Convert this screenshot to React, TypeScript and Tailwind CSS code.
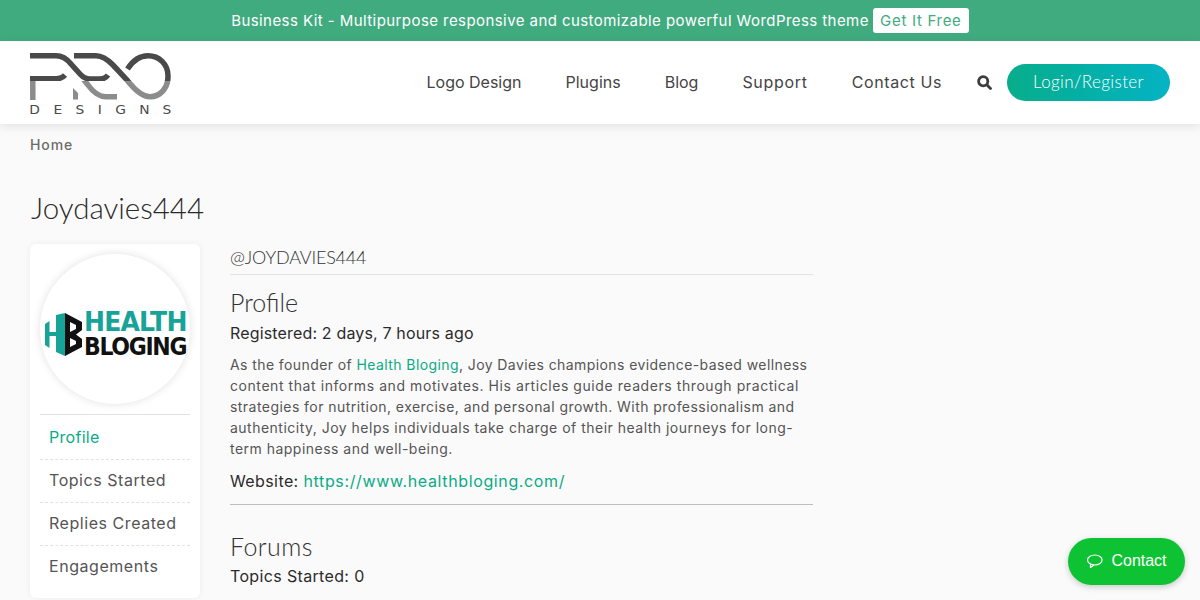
import React from "react";

const poppins = { fontFamily: "Inter, 'Noto Sans', sans-serif" };
const lato = { fontFamily: "Lato, sans-serif" };

function Logo() {
  return (
    <div className="relative w-[141px] h-[61px]">
      <svg width="141" height="47" viewBox="0 0 141 47" fill="none" className="block">
        <defs>
          <clipPath id="top"><rect x="0" y="0" width="141" height="28" /></clipPath>
          <clipPath id="bot"><rect x="0" y="28" width="141" height="20" /></clipPath>
        </defs>
        <g strokeWidth="5.500" fill="none">
          <g clipPath="url(#bot)" stroke="#8c8c8c">
            <path d="M2.800 26V47" />
            <path d="M46 17L58 32C63 39 68 43.700 76 43.700H87" />
            <path d="M83 12L97 27C104 36 112 43.700 120 43.700C131 43.700 138 34 138 24" />
          </g>
          <path d="M43 35L48 40V46.500H43Z" fill="#8c8c8c" stroke="none" />
          <g clipPath="url(#top)" stroke="#4a4a4a">
            <path d="M0 2.800H26C33 2.800 37 6 41 11L50 21C53 24.500 56 26 60 26H70C74 26 76 25 78 22" />
            <path d="M44 2.800H66C73 2.800 78 7 83 12L97 27C104 36 112 43.700 120 43.700C131 43.700 138 34 138 23C138 11 129 2.800 118 2.800C109 2.800 102 9 97.500 16" />
            <path d="M0 25.800H26C30 25.800 33 24.500 35 22" />
          </g>
        </g>
      </svg>
      <div className="absolute left-0 top-[50px] w-[141px] flex justify-between text-[#4a4a4a] text-[12px] leading-[14px] font-normal" style={{ fontFamily: "'DejaVu Sans', sans-serif" }}>
        {"DESIGNS".split("").map((c, i) => (
          <span key={i} className="scale-x-[1.15]">{c}</span>
        ))}
      </div>
    </div>
  );
}

function Avatar() {
  return (
    <div className="w-[150px] h-[150px] rounded-full bg-white shadow-[0_0_8px_rgba(0,0,0,0.12)] flex items-center gap-[1px] pl-[3px] pt-[10px] overflow-hidden">
      <svg width="40" height="47" viewBox="0 0 40 47" fill="none" className="shrink-0">
        <path d="M2 13L6.500 10V37L2 34Z" fill="#17a398" />
        <path d="M4 21H14V25H4Z" fill="#17a398" />
        <path d="M13 4L22 2V45L13 41Z" fill="#17a398" />
        <path d="M22 2L39 11V19L33 23.500L39 28V36L22 45Z" fill="#111" />
        <path d="M27 11L33 14V18L27 21ZM27 27L33 30V33L27 36Z" fill="#fff" />
      </svg>
      <div className="flex flex-col font-bold" style={{ fontFamily: "'DejaVu Sans', sans-serif" }}>
        <span className="text-[#17a398] tracking-[-0.9px] text-[27px] leading-[26px] scale-x-[0.93] origin-left">HEALTH</span>
        <span className="text-[#111] tracking-[-1.500px] text-[25px] leading-[24px] scale-x-[0.88] origin-left">BLOGING</span>
      </div>
    </div>
  );
}

export default function App() {
  return (
    <div className="relative h-[600px] overflow-hidden bg-[#fafafa] text-[#333]" style={poppins}>
      <div className="h-[41px] bg-[#41ab80] flex items-center justify-center text-white text-[15px] gap-1">
        <span className="tracking-[0.43px] pt-[1px]">Business Kit - Multipurpose responsive and customizable powerful WordPress theme</span>
        <span className="bg-white text-[#41ab80] rounded-[3px] h-[25px] w-[96px] flex items-center justify-center tracking-[0.7px] pt-[1px]">Get It Free</span>
      </div>

      <header className="relative h-[83px] bg-white shadow-[0_2px_10px_rgba(0,0,0,0.1)] flex items-center justify-between px-[30px]">
        <div className="pt-[1px]"><Logo /></div>
        <nav className="flex items-center text-[16px] text-[#444]">
          <div className="flex gap-[44px] mr-[35px] pb-[2px]">
            <span>Logo Design</span>
            <span>Plugins</span>
            <span>Blog</span>
            <span className="tracking-[0.7px]">Support</span>
            <span className="tracking-[0.6px]">Contact Us</span>
          </div>
          <svg width="15" height="15" viewBox="0 0 15 15" fill="none" stroke="#3d3d3d" strokeWidth="2.800" className="mr-[15px]">
            <circle cx="6.200" cy="6.200" r="4.600" />
            <path d="M9.800 9.800L13.500 13.500" strokeLinecap="round" />
          </svg>
          <span className="w-[163px] h-[37px] pb-[2px] rounded-full bg-gradient-to-r from-[#08ad8a] to-[#06b3c4] text-white flex items-center justify-center font-light text-[17px] tracking-[0.4px]" style={lato}>Login/Register</span>
        </nav>
      </header>

      <main className="px-[30px]">
        <div className="pt-[12px] text-[14px] leading-[18px] font-medium text-[#6b6b6b] tracking-[0.9px]">Home</div>
        <h1 className="mt-[34px] pl-[1px] text-[29.500px] leading-[40px] font-light text-[#2b2b2b]" style={lato}>Joydavies444</h1>
        <div className="mt-[16px] flex gap-[30px] items-start">
          <aside className="w-[170px] h-[354px] bg-white rounded-md shadow-[0_0_6px_rgba(0,0,0,0.06)] p-[10px] shrink-0">
            <Avatar />
            <div className="mt-[10px] border-t border-[#e2e2e2] text-[16px] text-[#555] tracking-[0.55px]">
              <div className="h-[45px] flex items-center pl-[9px] text-[#0aab85] tracking-[0.3px] border-b border-dashed border-[#e2e2e2]">Profile</div>
              <div className="h-[43px] pb-[2px] flex items-center pl-[9px] border-b border-dashed border-[#e2e2e2]">Topics Started</div>
              <div className="h-[43px] pb-[2px] flex items-center pl-[9px] border-b border-dashed border-[#e2e2e2]">Replies Created</div>
              <div className="h-[43px] pb-[4px] flex items-center pl-[9px]">Engagements</div>
            </div>
          </aside>
          <section className="w-[583px]">
            <div className="h-[31px] border-b border-[#e3e3e3] text-[18px] leading-[26px] text-[#333] font-light tracking-[-0.2px]" style={lato}>@JOYDAVIES444</div>
            <h2 className="mt-[11px] text-[25px] leading-[32px] font-light text-[#333]" style={lato}>Profile</h2>
            <p className="mt-[3px] text-[16px] leading-[24px] text-[#2b2b2b] tracking-[0.16px]">Registered: 2 days, 7 hours ago</p>
            <div className="mt-[9px] text-[14px] leading-[21px] text-[#555]">
              <p className="tracking-[0.41px]">As the founder of <span className="text-[#0aab85]">Health Bloging</span>, Joy Davies champions evidence-based wellness</p>
              <p className="tracking-[0.57px]">content that informs and motivates. His articles guide readers through practical</p>
              <p className="tracking-[0.45px]">strategies for nutrition, exercise, and personal growth. With professionalism and</p>
              <p className="tracking-[0.49px]">authenticity, Joy helps individuals take charge of their health journeys for long-</p>
              <p className="tracking-[0.48px]">term happiness and well-being.</p>
            </div>
            <p className="mt-[10px] text-[16px] leading-[24px] text-[#2b2b2b] pb-[11px] border-b border-[#bdbdbd] tracking-[0.4px]">Website: <span className="text-[#0aab85] tracking-[0.63px]">https://www.healthbloging.com/</span></p>
            <h2 className="mt-[25px] text-[25px] leading-[32px] font-light text-[#333] tracking-[0.4px]" style={lato}>Forums</h2>
            <p className="mt-[2px] text-[16px] leading-[24px] text-[#2b2b2b] tracking-[0.35px]">Topics Started: 0</p>
          </section>
        </div>
      </main>

      <div className="absolute left-[1068px] top-[538px] w-[117px] h-[47px] pb-[2px] rounded-full bg-[#0ec333] shadow-[0_2px_6px_rgba(0,0,0,0.2)] flex items-center justify-center gap-[8px] text-white text-[16px]" style={{ fontFamily: "'Liberation Sans', sans-serif" }}>
        <svg width="17" height="16" viewBox="0 0 17 16" fill="none" stroke="#fff" strokeWidth="1.200">
          <ellipse cx="8.800" cy="7" rx="7.300" ry="5" />
          <path d="M4.500 11V14.500L8 12" strokeLinejoin="round" />
        </svg>
        <span>Contact</span>
      </div>
    </div>
  );
}
